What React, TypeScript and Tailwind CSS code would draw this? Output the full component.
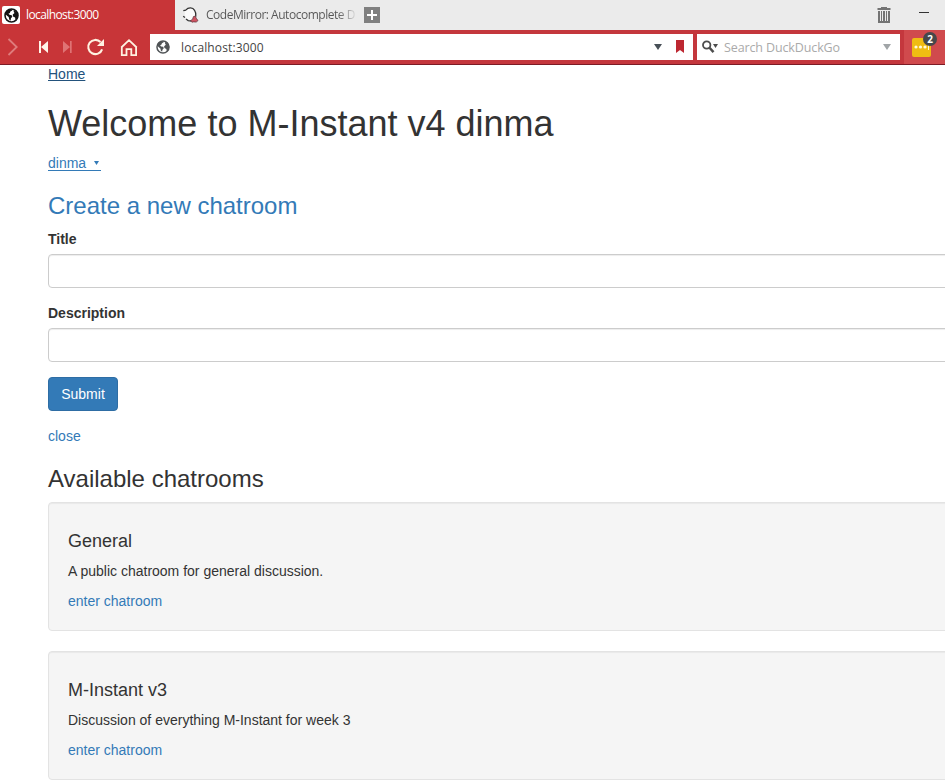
import React from "react";

function Globe({ size, color }: { size: number; color: string }) {
  return (
    <svg width={size} height={size} viewBox="0 0 16 16" className="shrink-0">
      <circle cx="8" cy="8" r="6.9" fill="none" stroke={color} strokeWidth="1.7" />
      <path d="M2 4.2L5 1.7l3.3-.4.5 1.4-2 .9-.5 1.6-1.6 1 1.2 1.1 2.3.5.7 1.5-1.5 1.7-.4 2.5-1.4-1.2-.6-2.6L2.9 8 1.4 6.5z" fill={color} />
      <path d="M10.6 2.1l3.5 2.6 1 3.3-1 3.6-1.8 1.2-.5-2.6-2.2-1.2-.3-2 1.9-1.6-.9-1.4z" fill={color} />
    </svg>
  );
}

function TabStrip() {
  return (
    <div className="flex h-[30px] bg-[#ebebeb]">
      <div className="flex w-[175px] items-center bg-[#c83538] pl-[2px]">
        <div className="flex h-[18px] w-[18px] items-center justify-center rounded-[2px] bg-white">
          <Globe size={15} color="#151515" />
        </div>
        <span className="ml-[6px] whitespace-nowrap text-[12px] leading-[18px] tracking-[-0.6px] text-white">localhost:3000</span>
      </div>
      <div className="flex w-[180px] items-center pl-[7px]">
        <svg width="17" height="17" viewBox="0 0 17 17" className="shrink-0">
          <path d="M3 4C6-1 13 0 14 6c1 5-1 8-5 9-4 0-7-4-6-11z" fill="#fbfbfb" />
          <path d="M1.3 3.6l2.4-.5C6.4.2 10.8.2 12.6 3.4c1.3 2 1.5 4.2 1.2 6.2M1.2 9.3l1.8 1.2M4 12l2.2 1.6 3.2.4" fill="none" stroke="#343434" strokeWidth="1.3" />
          <path d="M8.6 13.6l2-1.4.8-2.6 1.8-.5 1.2 2.3 1.6 2.2-1.8 1.5-2.6-.2-1.7.3z" fill="#cf5361" stroke="#563239" strokeWidth=".7" />
        </svg>
        <span className="ml-[7px] whitespace-nowrap bg-linear-to-r from-[#555555] from-88% to-[#d8d8d8] bg-clip-text text-[12px] leading-[18px] tracking-[-0.48px] text-transparent">CodeMirror: Autocomplete D</span>
      </div>
      <div className="flex flex-1 items-center pl-[9px]">
        <svg width="16" height="16" viewBox="0 0 16 16">
          <path d="M0 0h16v16H0z" fill="#808080" />
          <path d="M8 3v10M3 8h10" stroke="#fff" strokeWidth="2" />
        </svg>
        <svg width="14" height="17" viewBox="0 0 14 17" className="ml-auto">
          <path d="M4 0h6v1h3.5v2H.5V1H4z" fill="#737373" />
          <path d="M1 4h12v12H1zM3 4v10h1V4zM5 4v10h1V4zM8 4v10h1V4zM10 4v10h1V4z" fill="#737373" fillRule="evenodd" />
        </svg>
        <div className="mb-[5px] ml-[28px] mr-[16px] h-px w-[10px] bg-[#333333]" />
      </div>
    </div>
  );
}

function Toolbar() {
  return (
    <div className="flex h-[35px] items-center border-b border-[#7d1b25] bg-[#c4373d]">
      <svg width="150" height="34" viewBox="0 0 150 34" className="shrink-0 bg-[#c83538]">
        <path d="M8.5 9l8.2 8-8.2 8" fill="none" stroke="#df7c7c" strokeWidth="1.8" />
        <path d="M39 11h2v12h-2zM48 11v12l-7-6z" fill="#fff5e9" />
        <path d="M70 11h1.7v12H70zM63 11v12l7-6z" fill="#df7374" />
        <path d="M100.5 12.1a7.1 7.1 0 1 0 1.6 7.2" fill="none" stroke="#fff2e1" strokeWidth="2.1" />
        <path d="M104 9v7h-7z" fill="#fff2e1" />
        <path d="M121.8 17v8.1h4.7v-6h4.8v6h4.8V17M121.3 17.5l7.7-7.3 7.7 7.3" fill="none" stroke="#fff2e1" strokeWidth="1.8" />
      </svg>
      <div className="flex h-[26px] w-[543px] items-center bg-white pl-[6px]">
        <Globe size={14} color="#505356" />
        <span className="ml-[11px] whitespace-nowrap pt-[2px] text-[12px] leading-[18px] tracking-[0.13px] text-[#444444]">localhost:3000</span>
        <svg width="31" height="14" viewBox="0 0 31 14" className="ml-auto mr-[8px]">
          <path d="M0 4h8l-4 6z" fill="#485057" />
          <path d="M22 0h8v13l-4-3-4 3z" fill="#bd2731" />
        </svg>
      </div>
      <div className="ml-[4px] flex h-[26px] w-[203px] items-center bg-white pl-[5px]">
        <svg width="17" height="14" viewBox="0 0 17 14">
          <circle cx="4.7" cy="5" r="3.7" fill="none" stroke="#4d4d4d" strokeWidth="1.8" />
          <path d="M7.3 7.5l4.2 4.6" stroke="#4d4d4d" strokeWidth="2.5" />
          <path d="M11 4h5l-2.5 4z" fill="#4d4d4d" />
        </svg>
        <span className="ml-[5px] whitespace-nowrap pt-[2px] text-[12.5px] leading-[18px] tracking-[-0.12px] text-[#aaaaaa]">Search DuckDuckGo</span>
        <svg width="8" height="6" viewBox="0 0 8 6" className="ml-auto mr-[9px]">
          <path d="M0 0h8L4 6z" fill="#a1a5a7" />
        </svg>
      </div>
      <div className="ml-[4px] flex h-[34px] flex-1 items-center bg-[#d04a4d] pl-[8px]">
        <div className="relative flex h-[19px] w-[19px] items-center justify-center rounded-[2px] bg-[#efbc12]">
          <svg width="16" height="6" viewBox="0 0 16 6">
            <circle cx="2" cy="3" r="1.6" fill="#fff9d9" />
            <circle cx="6.5" cy="3" r="1.6" fill="#fff9d9" />
            <circle cx="11" cy="3" r="1.6" fill="#fff9d9" />
            <path d="M14.5 0v6" stroke="#fff9d9" />
          </svg>
          <div className="absolute left-[11px] top-[-6px] flex h-[14px] w-[14px] items-center justify-center rounded-full bg-[#45484b] text-[10px] font-bold leading-[14px] text-white">2</div>
        </div>
      </div>
    </div>
  );
}

function Field({ label }: { label: string }) {
  return (
    <div className="mb-[15px]">
      <label className="mb-[5px] block font-bold">{label}</label>
      <input
        aria-label={label}
        className="block h-[34px] w-full rounded-[4px] border border-[#cccccc] bg-white px-3 shadow-[inset_0_1px_1px_rgba(0,0,0,0.075)]"
      />
    </div>
  );
}

function Chatroom({ name, description }: { name: string; description: string }) {
  return (
    <div className="mb-5 h-[129px] rounded-[4px] border border-[#e3e3e3] bg-[#f5f5f5] p-[19px] shadow-[inset_0_1px_1px_rgba(0,0,0,0.05)]">
      <h4 className="my-[10px] text-[18px] leading-[19px]">{name}</h4>
      <p className="mb-[10px]">{description}</p>
      <a className="block text-[#337ab7]">enter chatroom</a>
    </div>
  );
}

export default function App() {
  return (
    <div className="h-[783px] w-[945px] overflow-hidden bg-white">
      <header className="relative z-10 font-['Open_Sans','Noto_Sans',sans-serif]">
        <TabStrip />
        <Toolbar />
      </header>
      <main className="-mt-[2px] ml-[48px] w-[960px] font-['Liberation_Sans',Arial,sans-serif] text-[14px] leading-[20px] text-[#333333]">
        <div className="pt-px">
          <a className="block text-[#23527c] underline">Home</a>
        </div>
        <h1 className="mt-[20px] mb-[9px] text-[36px] leading-[40px]">Welcome to M-Instant v4 dinma</h1>
        <a className="flex h-[20px] w-[53px] items-center text-[#337ab7]">
          <span className="flex h-[16px] flex-1 items-center border-b border-[#337ab7]">
            <span>dinma</span>
            <svg width="5" height="4" viewBox="0 0 5 4" className="ml-[8px]">
              <path d="M0 0h5L2.5 4z" fill="#337ab7" />
            </svg>
          </span>
        </a>
        <h3 className="mt-[20px] mb-[10px] text-[24px] leading-[26px] text-[#337ab7]">Create a new chatroom</h3>
        <Field label="Title" />
        <Field label="Description" />
        <button className="block h-[34px] w-[70px] rounded-[4px] border border-[#2e6da4] bg-[#337ab7] text-white">Submit</button>
        <a className="mt-[15px] block text-[#337ab7]">close</a>
        <h3 className="mt-[20px] mb-[10px] text-[24px] leading-[26px]">Available chatrooms</h3>
        <Chatroom name="General" description="A public chatroom for general discussion." />
        <Chatroom name="M-Instant v3" description="Discussion of everything M-Instant for week 3" />
      </main>
    </div>
  );
}
